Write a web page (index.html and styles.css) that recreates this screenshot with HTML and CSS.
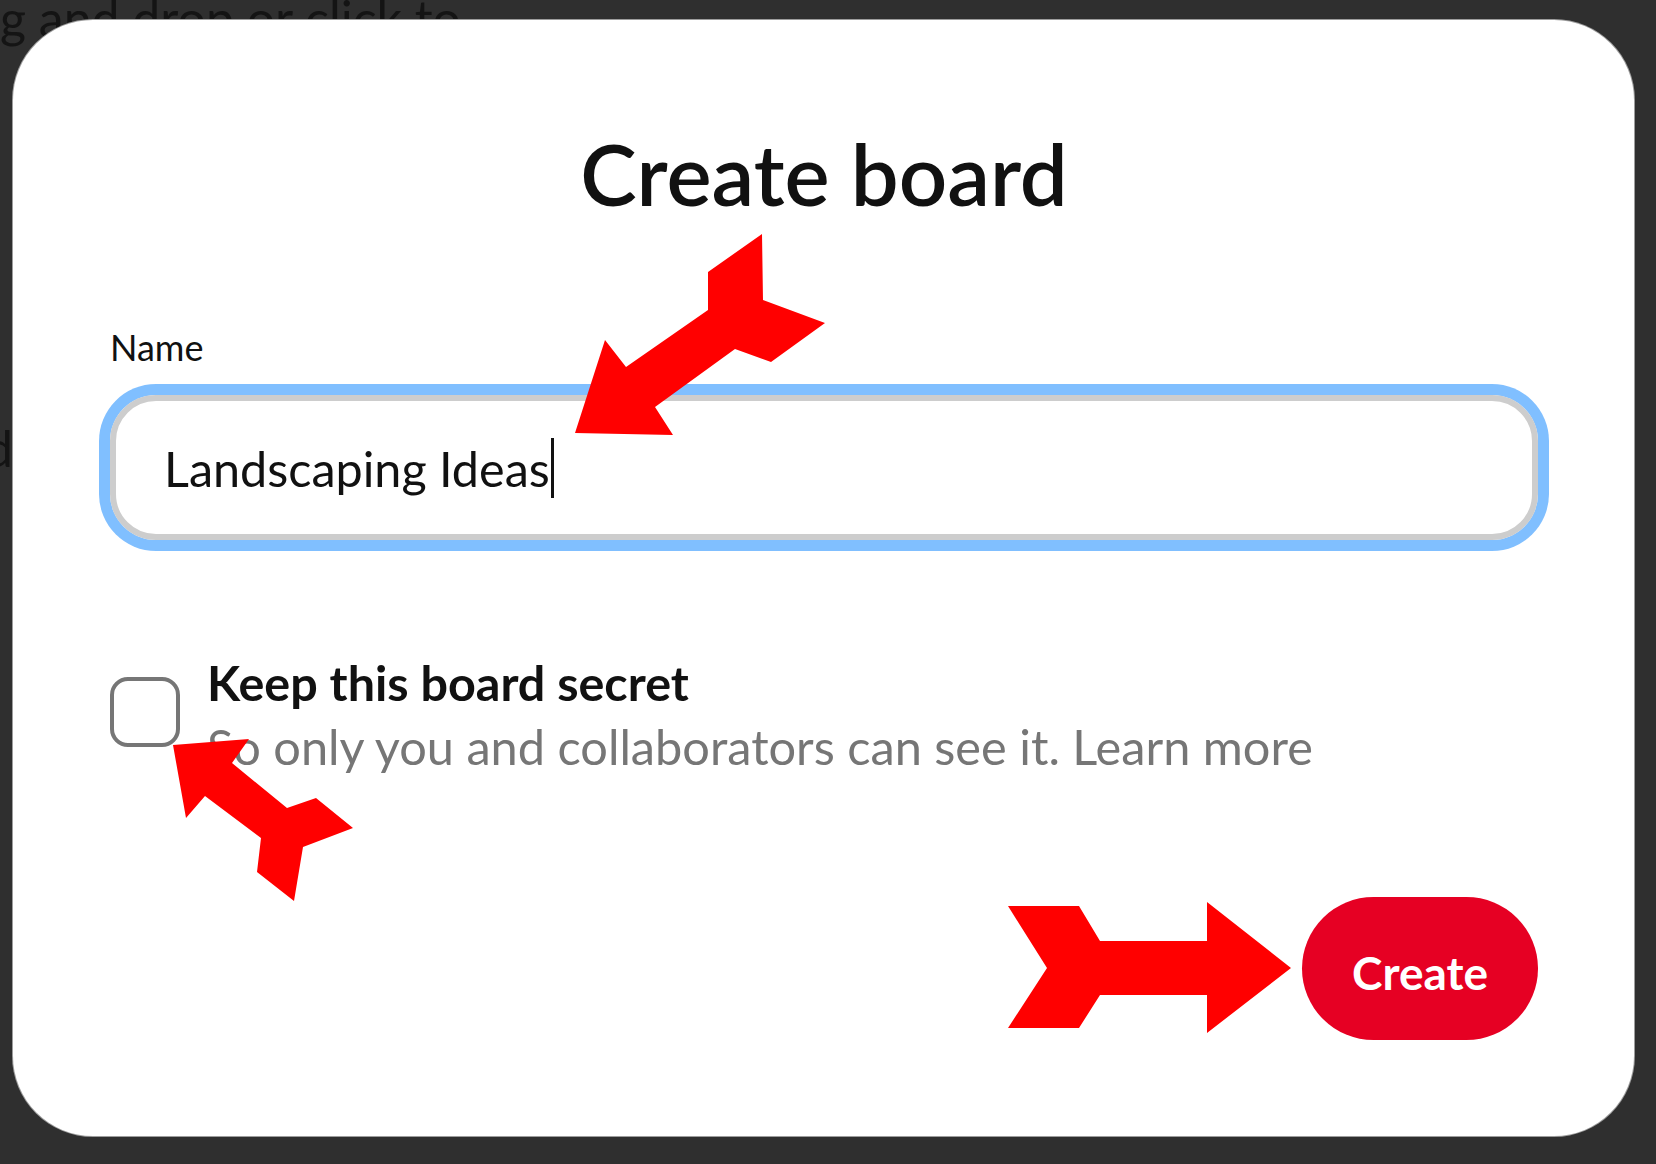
FILE: index.html
```html
<!DOCTYPE html>
<html lang="en">
<head>
<meta charset="utf-8">
<title>Create board</title>
<link rel="stylesheet" href="styles.css">
</head>
<body>
  <div class="backdrop">
    <div class="bg-text">g and drop or click to</div>
    <div class="bg-frag">d</div>
  </div>

  <div class="modal">
    <h1 class="title">Create board</h1>
    <div class="label">Name</div>
    <div class="field"><span class="field-text">Landscaping Ideas</span><span class="caret"></span></div>
    <div class="secret">
      <span class="checkbox"></span>
      <div class="secret-text">
        <div class="secret-title">Keep this board secret</div>
        <div class="secret-desc">So only you and collaborators can see it. Learn more</div>
      </div>
    </div>
    <div class="actions"><button class="create">Create</button></div>
  </div>

  <svg class="annotations" viewBox="0 0 1656 1164" width="1656" height="1164">
    <polygon class="arrow" points="575,433 605,340 626,367 708,310 708,272 762,234 763,300 825,323 771,362 735,349 655,407 673,435"/>
    <polygon class="arrow" points="173,745 249,739 232,763 287,808 316,798 353,828 303,847 294,901 257,872 261,838 205,796 186,818"/>
    <polygon class="arrow" points="1008,906 1079,906 1100,941 1207,941 1207,902 1291,968 1207,1033 1207,995 1100,995 1079,1028 1008,1028 1047,968"/>
  </svg>
</body>
</html>
```
FILE: styles.css
```css
html, body {
  margin: 0;
  padding: 0;
}

body {
  width: 1656px;
  height: 1164px;
  overflow: hidden;
  position: relative;
  background: #2f2f2f;
  font-family: Lato, "Liberation Sans", sans-serif;
}

.backdrop {
  color: #141414;
  font-size: 50px;
}

.bg-text {
  line-height: 36px;
  white-space: nowrap;
}

.bg-frag {
  line-height: 36px;
  margin-top: 394px;
  margin-left: -15px;
}

.modal {
  position: absolute;
  left: 13px;
  top: 20px;
  width: 1621px;
  height: 1116px;
  box-sizing: border-box;
  padding: 102px 96px 0 97px;
  background: #ffffff;
  border-radius: 80px;
  box-shadow: 0 0 0 1px #9d9d9d;
  display: flex;
  flex-direction: column;
}

.title {
  margin: 0;
  font-size: 85px;
  font-weight: 600;
  line-height: 102px;
  text-align: center;
  color: #111111;
}

.label {
  margin-top: 102px;
  font-size: 36px;
  line-height: 43px;
  color: #111111;
}

.field {
  margin-top: 26px;
  height: 145px;
  box-sizing: border-box;
  border: 6px solid #cdcdcd;
  border-radius: 46px;
  box-shadow: 0 0 0 11px #80bfff;
  display: flex;
  align-items: center;
  padding-left: 48px;
}

.field-text {
  font-size: 48.5px;
  line-height: 60px;
  color: #111111;
}

.caret {
  width: 3px;
  height: 60px;
  background: #111111;
  margin-left: 1px;
}

.secret {
  margin-top: 112px;
  display: flex;
  align-items: flex-start;
  gap: 27px;
}

.checkbox {
  margin-top: 25px;
  width: 70px;
  height: 70px;
  box-sizing: border-box;
  border: 4.5px solid #767676;
  border-radius: 18px;
  flex: none;
}

.secret-title {
  font-size: 48.5px;
  font-weight: 700;
  line-height: 60px;
  color: #111111;
}

.secret-desc {
  margin-top: 4px;
  font-size: 48.7px;
  line-height: 60px;
  color: #767676;
}

.actions {
  margin-top: 121px;
  display: flex;
  justify-content: flex-end;
}

.create {
  width: 236px;
  height: 143px;
  border: none;
  border-radius: 72px;
  background: #e60023;
  color: #ffffff;
  font-family: Lato, "Liberation Sans", sans-serif;
  font-size: 46px;
  font-weight: 700;
  padding: 8px 0 0 0;
}

.annotations {
  position: absolute;
  left: 0;
  top: 0;
  pointer-events: none;
}

.arrow {
  fill: #ff0000;
}
```
